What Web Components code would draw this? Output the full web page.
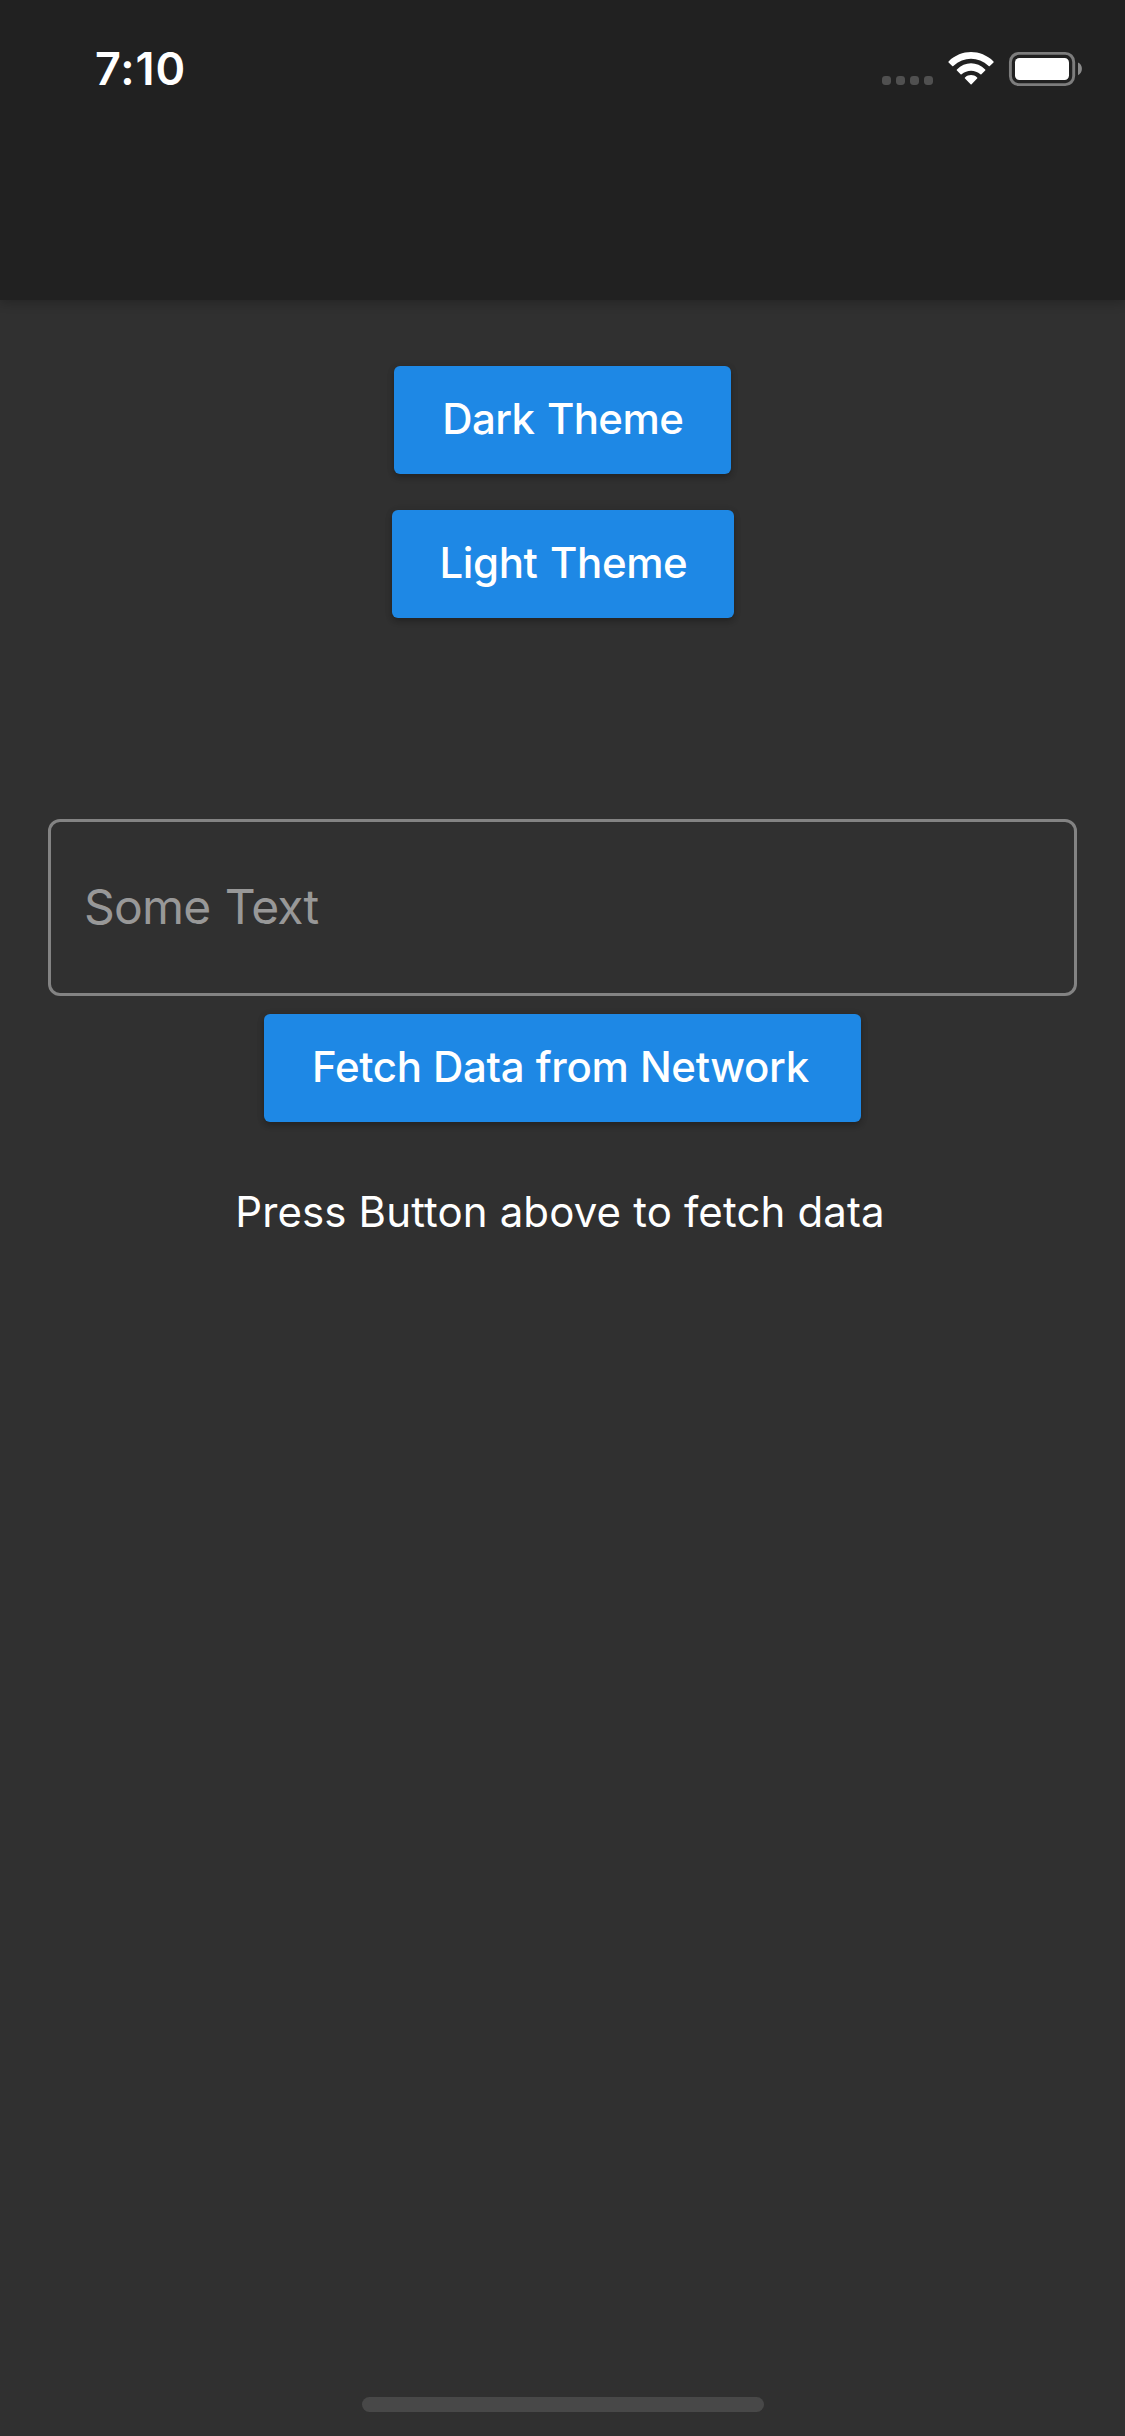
<!DOCTYPE html>
<html lang="en">
<head>
<meta charset="utf-8">
<title>Theme Demo</title>
<style>
html,body{margin:0;background:#303030}
body{font-family:Inter,"Liberation Sans",sans-serif}
</style>
</head>
<body>
<theme-screen></theme-screen>
<script>
class StatusBar extends HTMLElement {
  constructor() {
    super();
    this.attachShadow({mode: 'open'}).innerHTML = `
    <style>
      :host{display:flex;justify-content:space-between;align-items:flex-start;height:132px;box-sizing:border-box;padding:0 41px 0 95px;color:#fff}
      .time{font-size:45px;font-weight:600;line-height:54px;margin-top:42px;letter-spacing:.9px}
      svg{display:block;margin-top:48px}
    </style>
    <span class="time"><slot></slot></span>
    <svg width="204" height="42" viewBox="880 48 204 42">
      <g fill="#505050">
        <rect x="882" y="76" width="9" height="9" rx="3.4"/><rect x="896" y="76" width="9" height="9" rx="3.4"/>
        <rect x="910" y="76" width="9" height="9" rx="3.4"/><rect x="924" y="76" width="9" height="9" rx="3.4"/>
      </g>
      <g fill="#fff">
        <path d="M948.6 61.4C961.5 49 980.5 49 993.5 61.4Q994 62 993.5 62.5L989.8 66Q989.3 66.5 988.7 66C978 56.4 964 56.4 953.3 66Q952.7 66.5 952.2 66L948.6 62.5Q948 62 948.6 61.4Z"/>
        <path d="M956.9 69.6C965 61.2 977 61.2 985.2 69.6Q985.7 70.1 985.2 70.6L981.4 74.3Q980.9 74.8 980.4 74.3C975.2 69.4 966.9 69.4 961.6 74.3Q961.1 74.8 960.6 74.3L956.9 70.6Q956.4 70.1 956.9 69.6Z"/>
        <path d="M965 77.4C968.6 74.3 973.5 74.3 977.1 77.4Q977.8 78 977.1 78.6L971.6 84.2Q971.1 84.7 970.6 84.2L965 78.6Q964.4 78 965 77.4Z"/>
        <rect x="1015" y="58" width="54" height="22" rx="4.5"/>
      </g>
      <rect x="1010.4" y="53.4" width="63.3" height="31.2" rx="8.5" fill="none" stroke="#7d7d7d" stroke-width="2.9"/>
      <path d="M1078 62.6C1083.2 64.5 1083.2 73.3 1078 75.2Z" fill="#8a8a8a"/>
    </svg>`;
  }
}
class AppBar extends HTMLElement {
  constructor() {
    super();
    this.attachShadow({mode: 'open'}).innerHTML = `
    <style>:host{display:block;height:300px;background:#212121;box-shadow:0 3px 10px rgba(0,0,0,.22)}</style>
    <slot></slot>`;
  }
}
class RaisedButton extends HTMLElement {
  constructor() {
    super();
    this.attachShadow({mode: 'open'}).innerHTML = `
    <style>
      :host{display:block}
      button{display:flex;align-items:center;justify-content:flex-start;box-sizing:border-box;width:100%;height:108px;padding:0 0 2px 48px;border:0;border-radius:6px;background:#1e88e5;color:#fff;font:500 42px/52px Inter,"Liberation Sans",sans-serif;letter-spacing:var(--ls,0);word-spacing:var(--ws,0);white-space:nowrap;box-shadow:0 3px 6px rgba(0,0,0,.25),0 1px 8px rgba(0,0,0,.08)}
    </style>
    <button><span><slot></slot></span></button>`;
  }
}
class OutlinedField extends HTMLElement {
  constructor() {
    super();
    this.attachShadow({mode: 'open'}).innerHTML = `
    <style>
      :host{display:flex;align-items:center;box-sizing:border-box;width:1029px;height:177px;border:3px solid #838383;border-radius:12px;padding:0 33px 2px;color:#989898;font-size:48px;line-height:58px;letter-spacing:-.83px;word-spacing:1.8px}
    </style>
    <span><slot></slot></span>`;
  }
}
class HomeIndicator extends HTMLElement {
  constructor() {
    super();
    this.attachShadow({mode: 'open'}).innerHTML = `
    <style>:host{display:block;width:402px;height:15px;border-radius:8px;background:#484848}</style>`;
  }
}
class ThemeScreen extends HTMLElement {
  constructor() {
    super();
    this.attachShadow({mode: 'open'}).innerHTML = `
    <style>
      :host{display:flex;flex-direction:column;width:1125px;height:2436px;background:#303030;overflow:hidden}
      main{flex:1;display:flex;flex-direction:column;align-items:center;padding-top:66px}
      .dark{width:336.5px;--ls:-.6px;--ws:1.9px}
      .light{width:342px;margin-top:36px;--ls:-.4px;--ws:1.8px}
      outlined-field{margin-top:201px}
      .fetch{width:597px;margin-top:18px;--ls:-.35px;--ws:.7px}
      p{margin:64px 0 0;padding-right:5px;color:#fff;font-size:42px;line-height:52px;letter-spacing:.13px;white-space:nowrap}
      home-indicator{align-self:center;margin:0 0 24px 1px}
    </style>
    <app-bar><status-bar>7:10</status-bar></app-bar>
    <main>
      <raised-button class="dark">Dark Theme</raised-button>
      <raised-button class="light">Light Theme</raised-button>
      <outlined-field>Some Text</outlined-field>
      <raised-button class="fetch">Fetch Data from Network</raised-button>
      <p>Press Button above to fetch data</p>
    </main>
    <home-indicator></home-indicator>`;
  }
}
customElements.define('status-bar', StatusBar);
customElements.define('app-bar', AppBar);
customElements.define('raised-button', RaisedButton);
customElements.define('outlined-field', OutlinedField);
customElements.define('home-indicator', HomeIndicator);
customElements.define('theme-screen', ThemeScreen);
</script>
</body>
</html>
